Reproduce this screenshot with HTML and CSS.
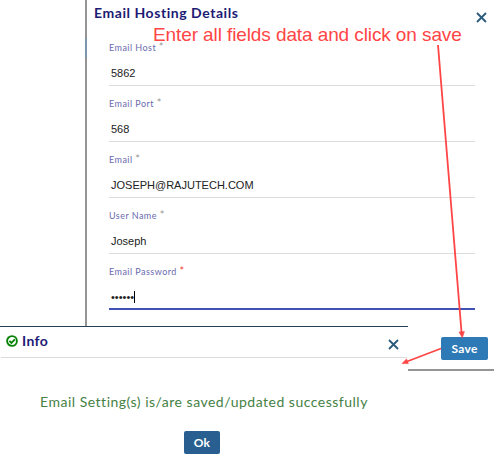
FILE: index.html
```html
<!DOCTYPE html>
<html lang="en">
<head>
<meta charset="utf-8">
<title>Email Hosting Details</title>
<link rel="stylesheet" href="styles.css">
</head>
<body>
<main class="stage">
  <section class="dialog">
    <header class="dialog-header">
      <h1 class="title">Email Hosting Details</h1>
      <svg class="close" viewBox="0 0 11 11"><path d="M1 1l9 9M10 1l-9 9"/></svg>
    </header>
    <form class="fields">
      <div class="field"><span class="label">Email Host <i>*</i></span><span class="value">5862</span></div>
      <div class="field"><span class="label">Email Port <i>*</i></span><span class="value">568</span></div>
      <div class="field"><span class="label">Email <i>*</i></span><span class="value">JOSEPH@RAJUTECH.COM</span></div>
      <div class="field"><span class="label">User Name <i>*</i></span><span class="value">Joseph</span></div>
      <div class="field active"><span class="label">Email Password <i>*</i></span><span class="value"><span class="dots">••••••</span><span class="caret"></span></span></div>
    </form>
    <footer class="dialog-footer"><span class="button save">Save</span></footer>
  </section>

  <section class="info">
    <header class="info-header">
      <svg class="check" viewBox="0 0 12 12"><circle cx="6" cy="6" r="4.900"/><path d="M3.400 5.900l2 2 3.500-3.600"/></svg>
      <h2 class="title">Info</h2>
      <svg class="close" viewBox="0 0 11 11"><path d="M1 1l9 9M10 1l-9 9"/></svg>
    </header>
    <p class="message">Email Setting(s) is/are saved/updated successfully</p>
    <span class="button ok">Ok</span>
  </section>

  <p class="callout">Enter all fields data and click on save</p>
  <svg class="arrows" viewBox="0 0 494 461">
    <path class="shaft" d="M438 45L461.600 333M441 348.500L407 361.500"/>
    <path class="head" d="M459 332l5.400-.4-2.100 6.200zM402 363.500l4.500-4.600 1.900 4.700z"/>
  </svg>
</main>
</body>
</html>
```
FILE: styles.css
```css
* { box-sizing: border-box; }
body {
  margin: 0;
  background: #fff;
  font-family: Lato, sans-serif;
}
.stage {
  position: relative;
  width: 494px;
  height: 461px;
  overflow: hidden;
}
.dialog {
  position: relative;
  display: flex;
  flex-direction: column;
  height: 371px;
  margin-left: 85px;
  border-left: 2px solid #959595;
  border-bottom: 2px solid #959595;
}
.dialog::before {
  content: "";
  position: absolute;
  left: -2px;
  top: 38px;
  width: 2px;
  height: 20px;
  background: #7d96ac;
}
.dialog-header {
  display: flex;
  justify-content: space-between;
  height: 38px;
  padding: 4px 7px 0 7px;
}
.title {
  margin: 0;
  color: #1b1b74;
  font-size: 14px;
  line-height: 18px;
  font-weight: 700;
  letter-spacing: 0.55px;
  white-space: nowrap;
}
.close {
  width: 11px;
  height: 11px;
  fill: none;
  stroke: #295a7b;
  stroke-width: 1.8;
}
.dialog-header .close { margin-top: 8px; }
.fields {
  margin: 0;
  padding: 0 19px 0 22px;
}
.field {
  display: flex;
  flex-direction: column;
  height: 56px;
  padding-top: 12px;
  border-bottom: 1px solid #dcdcdc;
}
.field:first-child {
  height: 48px;
  padding-top: 4px;
}
.field.active { border-bottom: 2px solid #3f51b5; }
.label {
  height: 12px;
  color: #6a6aae;
  font-size: 9px;
  line-height: 12px;
  letter-spacing: 0.46px;
}
.label i {
  color: #999;
  font-size: 11px;
  font-style: normal;
  line-height: 0;
}
.active .label i { color: #f44336; }
.value {
  display: flex;
  align-items: center;
  height: 14px;
  margin: 12px 0 0 2px;
  color: #222;
  font: 11px/14px "Liberation Sans", sans-serif;
}
.caret {
  width: 1px;
  height: 12px;
  background: #000;
}
.dialog-footer {
  display: flex;
  justify-content: flex-end;
  padding: 27px 6px 0 0;
}
.button {
  display: flex;
  align-items: center;
  justify-content: center;
  height: 23px;
  border-radius: 2px;
  color: #fff;
  font-size: 12px;
  font-weight: 700;
  letter-spacing: 0.3px;
}
.save { width: 47px; background: #2e7ab6; }
.info {
  position: absolute;
  left: 0;
  top: 326px;
  display: flex;
  flex-direction: column;
  align-items: center;
  width: 408px;
  height: 135px;
  border-top: 1px solid #263f52;
  background: #fff;
}
.info-header {
  display: flex;
  align-items: center;
  align-self: stretch;
  height: 31px;
  margin: 0 1px;
  padding: 0 8px 3px 5px;
  border-bottom: 1px solid #dcdcdc;
}
.info-header .title { margin-left: 4px; letter-spacing: 0.4px; }
.info-header .close { margin: 7px 0 0 auto; }
.check {
  width: 12px;
  height: 12px;
  fill: none;
  stroke: #078407;
  stroke-width: 1.9;
}
.message {
  margin: 34px 0 0;
  color: #458145;
  font-size: 14px;
  line-height: 20px;
  letter-spacing: 0.5px;
  white-space: nowrap;
}
.ok {
  width: 36px;
  margin: 19px 4px 0 0;
  background: #285f90;
}
.callout {
  position: absolute;
  left: 153px;
  top: 23px;
  margin: 0;
  color: #ff4545;
  font: 19px/23px "Liberation Sans", sans-serif;
  letter-spacing: -0.1px;
  white-space: nowrap;
}
.arrows {
  position: absolute;
  inset: 0;
  width: 494px;
  height: 461px;
}
.shaft {
  fill: none;
  stroke: #ff4545;
  stroke-width: 1.8;
}
.head { fill: #ff4545; stroke: #ff4545; stroke-width: 0.6; }
```
